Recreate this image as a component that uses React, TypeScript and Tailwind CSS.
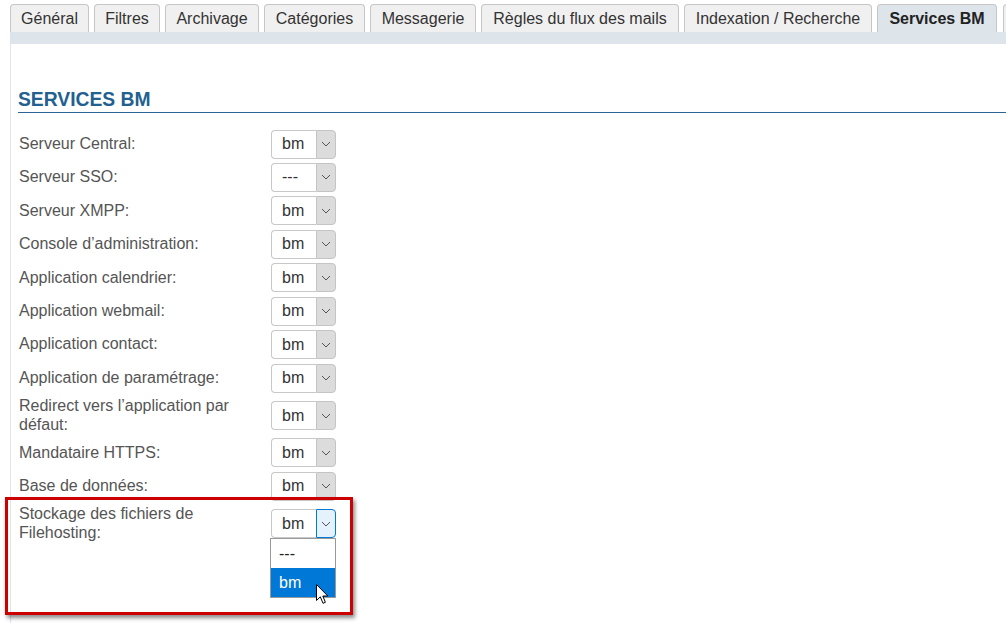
import React from "react";

const tabs: { t: string; w: string }[] = [
  { t: "Général", w: "w-[79px]" },
  { t: "Filtres", w: "w-[66px]" },
  { t: "Archivage", w: "w-[94px]" },
  { t: "Catégories", w: "w-[101px]" },
  { t: "Messagerie", w: "w-[106px]" },
  { t: "Règles du flux des mails", w: "w-[198px]" },
  { t: "Indexation / Recherche", w: "w-[188px]" },
];

type Row = { label: React.ReactNode; value: string };

const rows: Row[] = [
  { label: "Serveur Central:", value: "bm" },
  { label: "Serveur SSO:", value: "---" },
  { label: "Serveur XMPP:", value: "bm" },
  { label: "Console d’administration:", value: "bm" },
  { label: "Application calendrier:", value: "bm" },
  { label: "Application webmail:", value: "bm" },
  { label: "Application contact:", value: "bm" },
  { label: "Application de paramétrage:", value: "bm" },
  { label: "Redirect vers l’application par défaut:", value: "bm" },
  { label: "Mandataire HTTPS:", value: "bm" },
  { label: "Base de données:", value: "bm" },
];

function Chevron() {
  return (
    <svg width="10" height="6" viewBox="0 0 10 6" fill="none">
      <path d="M1 1 L5 5 L9 1" stroke="#555" strokeWidth="1" />
    </svg>
  );
}

function Select({ value, active }: { value: string; active?: boolean }) {
  return (
    <div className="flex h-[29px] w-[65px] shrink-0">
      <div className="flex-1 flex items-center pl-[10px] bg-white border border-r-0 border-[#c8c8c8] rounded-l-[4px] text-[16px] text-[#333]">
        {value}
      </div>
      <div
        className={`w-[20px] flex items-center justify-center border rounded-r-[4px] ${
          active
            ? "bg-[#e5f1fb] border-[#0078d7]"
            : "bg-[#dcdcdc] border-[#c4c4c4]"
        }`}
      >
        <Chevron />
      </div>
    </div>
  );
}

export default function App() {
  return (
    <div className="relative w-[1006px] h-[623px] bg-white overflow-hidden font-['Liberation_Sans',Arial,sans-serif]">
      {/* Tabs */}
      <div className="flex gap-[5px] pl-[10px] pt-[4px] h-[32px] whitespace-nowrap">
        {tabs.map((t) => (
          <div
            key={t.t}
            className={`${t.w} shrink-0 h-[28px] text-center border border-b-0 border-[#c6c6c6] rounded-t-[4px] bg-[#f0f0f0] text-[16px] leading-[27px] text-[#333]`}
          >
            {t.t}
          </div>
        ))}
        <div className="w-[120px] shrink-0 h-[28px] text-center border border-b-0 border-[#c6c6c6] rounded-t-[4px] bg-[#dde4ea] text-[16px] leading-[27px] font-bold text-[#222]">
          Services BM
        </div>
        <div className="h-[28px] w-[20px] ml-[1px] border border-b-0 border-[#c6c6c6] rounded-t-[4px] bg-[#f0f0f0] shrink-0" />
      </div>
      <div className="ml-[10px] h-[12px] bg-[#dde4ea]" />

      {/* Content */}
      <div className="ml-[10px] border-l border-[#dfe5ea] pl-[7px] pt-[45px] h-[579px]">
        <h2 className="text-[19.3px] leading-[22px] font-bold text-[#22608f] border-b border-[#2b6596] pb-[1px]">
          SERVICES BM
        </h2>
        <div className="flex flex-col gap-[4.45px] mt-[16.5px]">
          {rows.map((r, i) => (
            <div key={i} className="flex items-center">
              <div className="w-[253px] pl-[1px] pr-[20px] text-[16px] leading-[18.5px] text-[#555]">
                {r.label}
              </div>
              <Select value={r.value} />
            </div>
          ))}
          <div className="flex items-center">
            <div className="w-[253px] pl-[1px] pr-[60px] text-[16px] leading-[18.5px] text-[#555]">
              Stockage des fichiers de Filehosting:
            </div>
            <div className="relative">
              <Select value="bm" active />
              <div className="absolute left-[-1px] top-[29px] w-[66px] border border-[#999] bg-white z-10">
                <div className="h-[29px] flex items-center pl-[8px] text-[16px] text-[#222]">
                  ---
                </div>
                <div className="h-[29px] flex items-center pl-[8px] text-[16px] text-white bg-[#0078d7]">
                  bm
                </div>
              </div>
            </div>
          </div>
        </div>
      </div>

      {/* Red annotation box */}
      <div className="absolute left-[5px] top-[497px] w-[348px] h-[118px] border-[3px] border-[#cc0000] shadow-[2px_3px_4px_rgba(0,0,0,0.45)] pointer-events-none" />

      {/* Mouse cursor */}
      <svg
        className="absolute left-[316px] top-[584px] z-20"
        width="13"
        height="21"
        viewBox="0 0 13 21"
      >
        <path
          d="M0.5 0.5 L0.5 16.5 L4.3 12.8 L7 19.3 L9.4 18.3 L6.8 12 L11.8 12 Z"
          fill="#fff"
          stroke="#000"
          strokeWidth="1"
          strokeLinejoin="round"
        />
      </svg>
    </div>
  );
}
